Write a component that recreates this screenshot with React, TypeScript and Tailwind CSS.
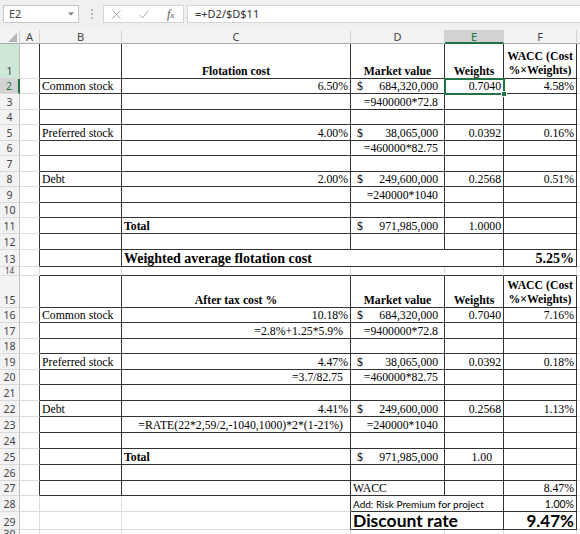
import React from "react";

const SERIF = "font-['Liberation_Serif','Times_New_Roman',serif]";
const UI = "font-['Segoe_UI','Noto_Sans','Open_Sans',sans-serif]";
const CAL = "font-['Lato','Carlito','Calibri',sans-serif]";

type CellDef = {
  span?: number;
  b?: boolean;
  node?: React.ReactNode;
  cls?: string;
  sel?: boolean;
  ov?: boolean;
};
type RowDef = { h: string; label: string; hk?: "mint" | "sel"; small?: boolean; cells: CellDef[] };

const W = ["w-[20px]", "w-[82px]", "w-[229px]", "w-[94px]", "w-[59px]", "w-[73px]"];

const L = "justify-start pl-[2px]";
const R = "justify-end pr-[2px]";
const CT = "justify-center";
const FR = "justify-end pr-[7px]";
const DR = "justify-end pr-[6px]";
const BOLD = "font-bold";

function Acct({ v }: { v: string }) {
  return (
    <span className="flex w-full justify-between pl-[6px] pr-[6px]">
      <span>$</span>
      <span>{v}</span>
    </span>
  );
}

const Wacc = (
  <span className="flex flex-col items-center leading-[14px] font-bold">
    <span>WACC (Cost</span>
    <span>%×Weights)</span>
  </span>
);

const n: CellDef = {};
const b = (node?: React.ReactNode, cls = "", extra: Partial<CellDef> = {}): CellDef => ({
  b: true,
  node,
  cls,
  ...extra,
});

const blank = (h: string, label: string): RowDef => ({
  h,
  label,
  cells: [n, b(), b(), b(), b(), b()],
});

const dataRow = (
  h: string,
  label: string,
  name: string,
  pct: string,
  mv: string,
  w: string,
  f: string,
  sel = false
): RowDef => ({
  h,
  label,
  hk: sel ? "sel" : undefined,
  cells: [
    n,
    b(name, L),
    b(pct, R),
    b(<Acct v={mv} />),
    b(w, R, sel ? { sel: true } : {}),
    b(f, R),
  ],
});

const ROWS: RowDef[] = [
  {
    h: "h-[35px]",
    label: "1",
    hk: "mint",
    cells: [
      n,
      b(),
      b("Flotation cost", CT + " " + BOLD),
      b("Market value", CT + " " + BOLD),
      b("Weights", CT + " " + BOLD),
      b(Wacc, CT),
    ],
  },
  dataRow("h-[15px]", "2", "Common stock", "6.50%", "684,320,000", "0.7040", "4.58%", true),
  { h: "h-[16px]", label: "3", cells: [n, b(), b(), b("=9400000*72.8", DR), b(), b()] },
  blank("h-[15px]", "4"),
  dataRow("h-[16px]", "5", "Preferred stock", "4.00%", "38,065,000", "0.0392", "0.16%"),
  { h: "h-[15px]", label: "6", cells: [n, b(), b(), b("=460000*82.75", DR), b(), b()] },
  blank("h-[16px]", "7"),
  dataRow("h-[15px]", "8", "Debt", "2.00%", "249,600,000", "0.2568", "0.51%"),
  { h: "h-[16px]", label: "9", cells: [n, b(), b(), b("=240000*1040", DR), b(), b()] },
  blank("h-[15px]", "10"),
  {
    h: "h-[16px]",
    label: "11",
    cells: [n, b(), b("Total", L + " " + BOLD), b(<Acct v="971,985,000" />), b("1.0000", R), b()],
  },
  blank("h-[16px]", "12"),
  {
    h: "h-[17px]",
    label: "13",
    cells: [
      n,
      b(),
      b("Weighted average flotation cost", L + " font-bold text-[14px] leading-[14px]", { span: 3 }),
      b("5.25%", R + " font-bold text-[14px] leading-[14px]"),
    ],
  },
  { h: "h-[9px]", label: "14", small: true, cells: [n, n, n, n, n, n] },
  {
    h: "h-[32px]",
    label: "15",
    cells: [
      n,
      b(),
      b("After tax cost %", CT + " " + BOLD),
      b("Market value", CT + " " + BOLD),
      b("Weights", CT + " " + BOLD),
      b(Wacc, CT),
    ],
  },
  dataRow("h-[15px]", "16", "Common stock", "10.18%", "684,320,000", "0.7040", "7.16%"),
  {
    h: "h-[16px]",
    label: "17",
    cells: [n, b(), b("=2.8%+1.25*5.9%", FR), b("=9400000*72.8", DR), b(), b()],
  },
  blank("h-[15px]", "18"),
  dataRow("h-[16px]", "19", "Preferred stock", "4.47%", "38,065,000", "0.0392", "0.18%"),
  {
    h: "h-[15px]",
    label: "20",
    cells: [n, b(), b("=3.7/82.75", FR), b("=460000*82.75", DR), b(), b()],
  },
  blank("h-[16px]", "21"),
  dataRow("h-[16px]", "22", "Debt", "4.41%", "249,600,000", "0.2568", "1.13%"),
  {
    h: "h-[16px]",
    label: "23",
    cells: [
      n,
      b(),
      b("=RATE(22*2,59/2,-1040,1000)*2*(1-21%)", FR),
      b("=240000*1040", DR),
      b(),
      b(),
    ],
  },
  blank("h-[16px]", "24"),
  {
    h: "h-[16px]",
    label: "25",
    cells: [
      n,
      b(),
      b("Total", L + " " + BOLD),
      b(<Acct v="971,985,000" />),
      b("1.00", "justify-end pr-[11px]"),
      b(),
    ],
  },
  blank("h-[16px]", "26"),
  {
    h: "h-[15px]",
    label: "27",
    cells: [n, b(), b(), b("WACC", L), b(), b("8.47%", R)],
  },
  {
    h: "h-[16px]",
    label: "28",
    cells: [
      n,
      n,
      n,
      b("Add: Risk Premium for project", L + " " + CAL + " text-[10px]", { span: 2 }),
      b("1.00%", R + " " + CAL + " text-[10.5px]"),
    ],
  },
  {
    h: "h-[18px]",
    label: "29",
    cells: [
      n,
      n,
      n,
      b("Discount rate", L + " " + CAL + " font-bold text-[17.5px] leading-[17px]", {
        span: 2,
        ov: true,
      }),
      b("9.47%", R + " " + CAL + " font-bold text-[17px] leading-[17px]", { ov: true }),
    ],
  },
  { h: "h-[12px]", label: "30", cells: [n, n, n, n, n, n] },
];

function FormulaBar() {
  return (
    <div className={`h-[30px] bg-[#f0f0f0] flex items-start pt-[5px] ${UI} text-[11px] text-[#333]`}>
      <div className="ml-[3px] w-[76px] h-[18px] shrink-0 bg-white border border-[#c6c6c6] flex items-center pl-[5px] leading-[14px]">
        <span className="text-[#444]">E2</span>
        <span className="ml-auto mr-[4px] flex items-center">
          <svg width="6" height="4" viewBox="0 0 6 4">
            <path d="M0 0.5H6L3 3.5Z" fill="#7a7a7a" />
          </svg>
        </span>
      </div>
      <div className="ml-[12px] mt-[4px] flex flex-col gap-[2px] shrink-0">
        <span className="w-[2px] h-[2px] bg-[#b8b8b8]" />
        <span className="w-[2px] h-[2px] bg-[#b8b8b8]" />
        <span className="w-[2px] h-[2px] bg-[#b8b8b8]" />
      </div>
      <div className="ml-[10px] w-[81px] h-[18px] shrink-0 bg-white border border-[#d4d4d4] flex items-center pl-[8px]">
        <svg width="9" height="9" viewBox="0 0 9 9">
          <path d="M0.5 0.5L8.5 8.5M8.5 0.5L0.5 8.5" stroke="#a8a8a8" strokeWidth="1" />
        </svg>
        <svg className="ml-[18px]" width="10" height="9" viewBox="0 0 10 9">
          <path d="M0.5 5L3.5 8L9.5 0.5" stroke="#a8a8a8" strokeWidth="1" fill="none" />
        </svg>
        <span className={`ml-[18px] ${SERIF} italic text-[12px] leading-[14px] text-[#555]`}>
          f<span className="text-[9px]">x</span>
        </span>
      </div>
      <div className="ml-[3px] flex-1 h-[18px] bg-white border border-[#d4d4d4] border-r-0 flex items-center pl-[7px] leading-[14px]">
        =+D2/$D$11
      </div>
    </div>
  );
}

function ColHeader() {
  const letters = ["A", "B", "C", "D", "E", "F"];
  return (
    <div className={`flex h-[14px] ${UI} text-[11px] leading-[13px] text-[#444] bg-[#f3f3f3]`}>
      <div className="w-[20px] shrink-0 border-r border-r-[#d4d4d4] border-b border-b-[#ababab] flex items-end justify-end pr-[2px] pb-[1px]">
        <svg width="9" height="9" viewBox="0 0 9 9">
          <path d="M9 0L9 9L0 9Z" fill="#b4b4b4" />
        </svg>
      </div>
      {letters.map((l, i) => (
        <div
          key={l}
          className={`${W[i]} shrink-0 border-r border-r-[#d4d4d4] flex justify-center ${
            i === 4
              ? "bg-[#d2d2d2] text-[#217346] border-b-2 border-b-[#217346]"
              : "border-b border-b-[#ababab]"
          }`}
        >
          {l}
        </div>
      ))}
      <div className="flex-1 border-b border-b-[#ababab]" />
    </div>
  );
}

function RowHead({ label, hk, small }: { label: string; hk?: "mint" | "sel"; small?: boolean }) {
  const cls =
    hk === "sel"
      ? "bg-[#d2d2d2] text-[#217346] border-r-2 border-r-[#217346]"
      : hk === "mint"
      ? "bg-[#cde8d7] text-[#444] border-r border-r-[#bdbdbd]"
      : "bg-[#f3f3f3] text-[#444] border-r border-r-[#bdbdbd]";
  return (
    <div
      className={`w-[20px] shrink-0 flex items-end justify-center overflow-hidden ${UI} ${
        small ? "text-[8px] leading-[8px]" : "text-[10.5px] leading-[13px]"
      } border-b border-b-[#dadada] ${cls}`}
    >
      {label}
    </div>
  );
}

export default function App() {
  const grid = ROWS.map((r) => {
    const arr: boolean[] = [];
    r.cells.forEach((c) => {
      for (let i = 0; i < (c.span ?? 1); i++) arr.push(!!c.b);
    });
    return arr;
  });

  return (
    <div className={`w-[580px] h-[534px] overflow-hidden bg-white ${SERIF} text-[11.75px] leading-[13px] text-black`}>
      <FormulaBar />
      <ColHeader />
      {ROWS.map((r, ri) => {
        let col = 0;
        return (
          <div key={ri} className={`flex ${r.h}`}>
            <RowHead label={r.label} hk={r.hk} small={r.small} />
            {r.cells.map((c, ci) => {
              const span = c.span ?? 1;
              const start = col;
              col += span;
              const nextB = grid[ri][col] ?? false;
              const below = grid[ri + 1] ? grid[ri + 1].slice(start, col).some(Boolean) : false;
              const rDark = !!c.b || nextB;
              const bDark = !!c.b || below;
              const w = span === 3 ? "w-[382px]" : span === 2 ? "w-[153px]" : W[start];
              return (
                <div
                  key={ci}
                  className={`${w} shrink-0 border-r border-b ${rDark ? "border-r-[#333]" : "border-r-[#dcdcdc]"} ${
                    bDark ? "border-b-[#333]" : "border-b-[#dcdcdc]"
                  } flex items-end whitespace-nowrap ${
                    c.ov || c.sel ? "overflow-visible" : "overflow-hidden"
                  } ${c.sel ? "relative outline-2 outline-[#217346] -outline-offset-1" : ""} ${c.cls ?? ""}`}
                >
                  {c.node}
                  {c.sel && (
                    <span className="absolute right-[-4px] bottom-[-4px] w-[6px] h-[6px] bg-[#217346] border border-white" />
                  )}
                </div>
              );
            })}
            <div className="flex-1 border-b border-b-[#dcdcdc]" />
          </div>
        );
      })}
    </div>
  );
}
